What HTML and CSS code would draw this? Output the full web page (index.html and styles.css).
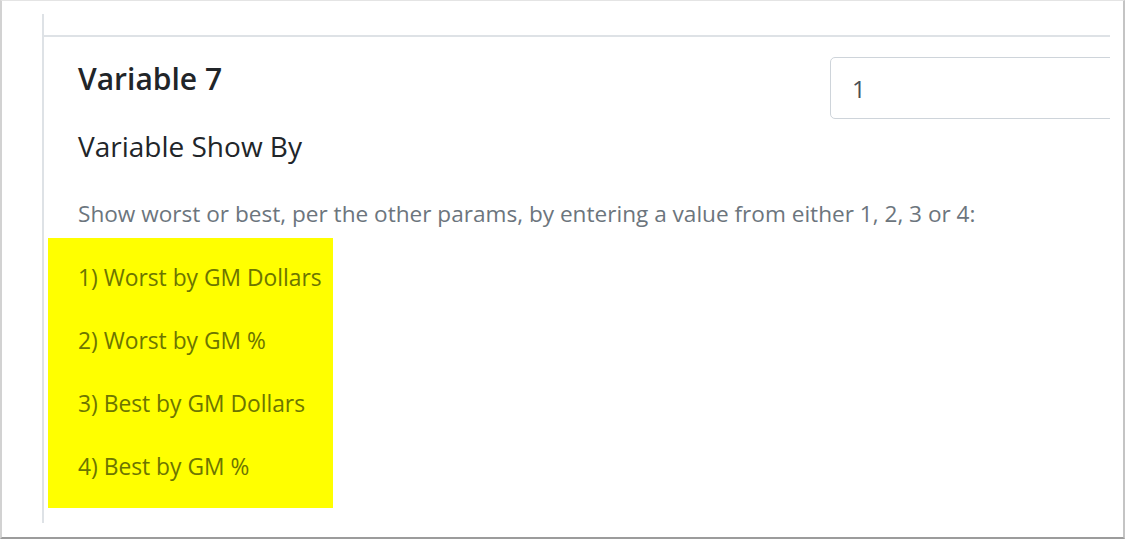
FILE: index.html
```html
<!DOCTYPE html>
<html>
<head lang="en">
    <meta charset="UTF-8">
    <title>Variable 7</title>
    <link rel="stylesheet" href="styles.css">
</head>
<body>
    <div class="shot">
        <div class="viewport">
            <div class="panel">
                <div class="panel-top"></div>
                <div class="panel-body">
                    <div class="param-head">
                        <div class="param-text">
                            <h2 class="param-title">Variable 7</h2>
                            <h3 class="param-label">Variable Show By</h3>
                        </div>
                        <input class="param-input" type="text" value="1">
                    </div>
                    <p class="param-help">Show worst or best, per the other params, by entering a value from either 1, 2, 3 or 4:</p>
                    <div class="highlight">
                        <p>1) Worst by GM Dollars</p>
                        <p>2) Worst by GM %</p>
                        <p>3) Best by GM Dollars</p>
                        <p>4) Best by GM %</p>
                    </div>
                </div>
            </div>
        </div>
    </div>
</body>
</html>
```

FILE: styles.css
```css
* {
    margin: 0;
    padding: 0;
    box-sizing: border-box;
}
body {
    background: #fff;
    font-family: "Segoe UI", "Open Sans", "Noto Sans", sans-serif;
    color: #212529;
}
.shot {
    width: 1125px;
    height: 539px;
    border-top: 1px solid #e4e4e4;
    border-left: 2px solid #d2d2d2;
    border-right: 2px solid #c4c4c4;
    border-bottom: 2px solid #9c9c9c;
    box-shadow: 0 1px 0 #d6d6d6;
    overflow: hidden;
}
.viewport {
    margin-left: 40px;
    padding-top: 13px;
    width: 1068px;
    overflow: hidden;
}
.panel {
    height: 509px;
    border-left: 2px solid #dee2e6;
}
.panel-top {
    height: 21px;
}
.panel-body {
    border-top: 2px solid #dee2e6;
    padding: 20px 0 0 34px;
}
.param-head {
    display: grid;
    grid-template-columns: 752px 1fr;
    align-items: start;
}
.param-title {
    margin-top: 2px;
    font-size: 30px;
    line-height: 40px;
    font-weight: 600;
}
.param-label {
    margin-top: 29px;
    font-size: 28px;
    line-height: 36px;
    font-weight: 400;
}
.param-input {
    width: 340px;
    height: 62px;
    border: 1px solid #ced4da;
    border-radius: 5px;
    padding: 0 21px;
    font-family: inherit;
    font-size: 24px;
    color: #495057;
    outline: none;
}
.param-help {
    margin-top: 35px;
    font-size: 22.6px;
    line-height: 30px;
    color: #6c757d;
}
.highlight {
    margin: 9px 0 0 -30px;
    width: 285px;
    padding: 25px 0 26px 30px;
    background: #ffff00;
    color: #6c7500;
    font-size: 22.8px;
    line-height: 30px;
}
.highlight p {
    margin-bottom: 33px;
}
.highlight p:last-child {
    margin-bottom: 0;
}
```
